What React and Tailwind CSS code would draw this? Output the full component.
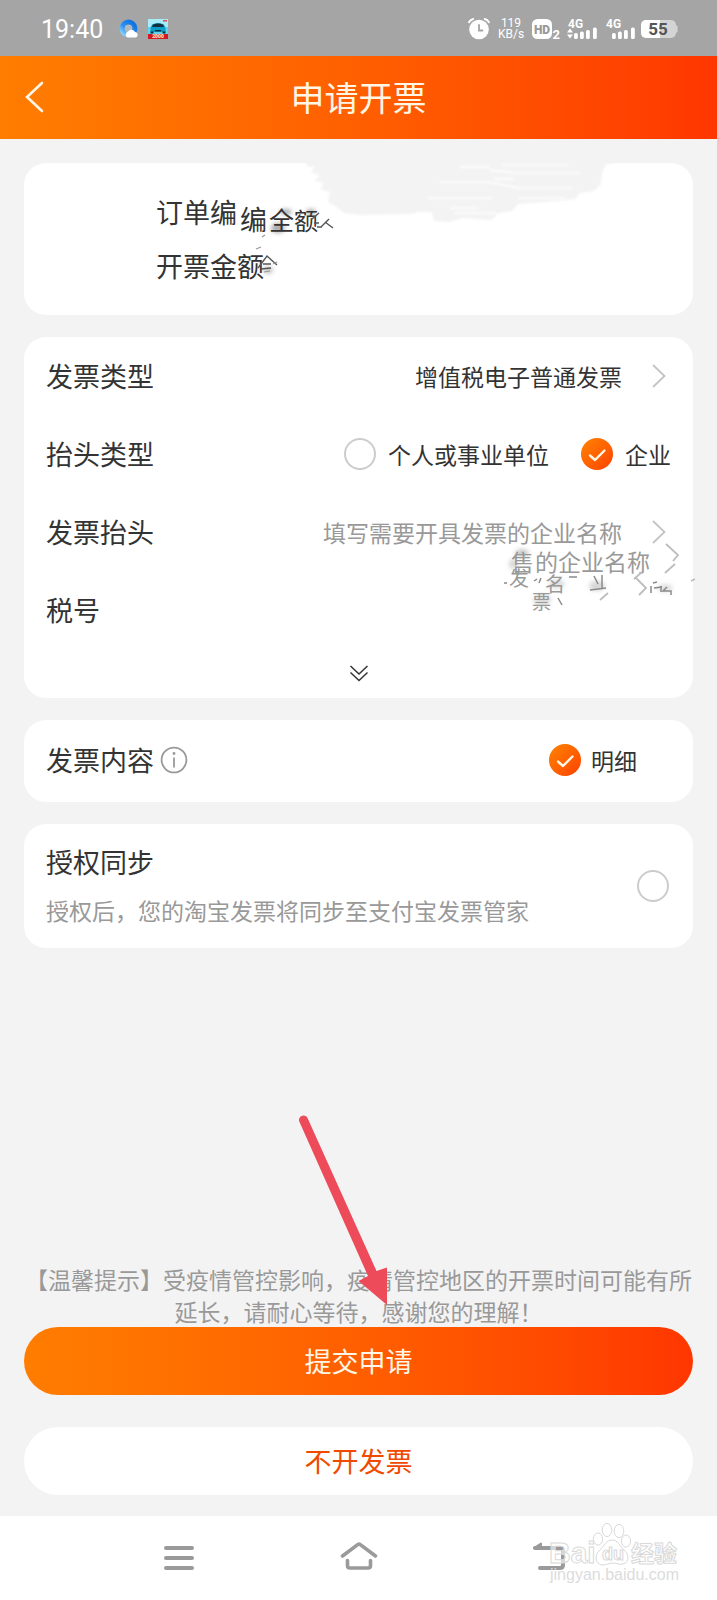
import React, { useState } from "react";

// Round radio / checkbox with the orange tick
const RoundInput = ({ type = "radio", ...props }) => (
  <span className="relative flex size-8 shrink-0">
    <input
      type={type}
      className="peer size-8 appearance-none rounded-full border-2 border-[#cccccc] bg-white checked:border-0 checked:bg-linear-135 checked:from-[#ff8200] checked:to-[#ff3c00]"
      {...props}
    />
    <svg
      viewBox="0 0 32 32"
      className="pointer-events-none absolute inset-0 hidden size-8 peer-checked:block"
      fill="none"
      stroke="#fff6e6"
      strokeWidth="2.4"
      strokeLinecap="round"
      strokeLinejoin="round"
    >
      <path d="M9 17.5 L14 22 L23.5 12.5" />
    </svg>
  </span>
);

const ChevronIcon = () => (
  <svg viewBox="0 0 24 24" className="size-6 shrink-0" fill="none" stroke="#c4c4c4" strokeWidth="1.8">
    <path d="M6 1 L17.5 12 L6 23" />
  </svg>
);

const Card = ({ className = "", children }) => (
  <section className={`relative rounded-[22px] bg-white ${className}`}>{children}</section>
);

const SignalIcon = ({ arrows }) => (
  <svg viewBox="0 0 31 22" className="h-[22px] w-[31px] overflow-visible" fill="#fff">
    <text x="1" y="10" fontSize="12" fontWeight="700" fontFamily="Roboto, sans-serif">
      4G
    </text>
    {arrows && <path d="M0 14.5 L3 10.5 L6 14.5 Z M0 16.5 L3 20.5 L6 16.5 Z" />}
    <rect x="7" y="15" width="3.8" height="6" rx="1.6" />
    <rect x="13" y="13.5" width="3.8" height="7.5" rx="1.6" />
    <rect x="19" y="12" width="3.8" height="9" rx="1.6" />
    <rect x="26" y="9.5" width="3.8" height="11.5" rx="1.6" />
  </svg>
);

const StatusBar = () => (
  <div className="flex h-14 items-center justify-between bg-[#a5a5a5] pt-0.5 pr-[39px] pl-[41px] font-['Roboto',sans-serif] text-white">
    <div className="flex items-center">
      <span className="pt-0.5 text-[25px] leading-8">19:40</span>
      <svg viewBox="0 0 20 20" className="ml-4 size-5">
        <defs>
          <linearGradient id="ring" x1="1" y1="0" x2="0" y2="1">
            <stop offset="0" stopColor="#0a6fe0" />
            <stop offset="0.6" stopColor="#2b8ff0" />
            <stop offset="1" stopColor="#8fdcff" />
          </linearGradient>
        </defs>
        <circle cx="9.5" cy="9.5" r="6.4" fill="#b4b8bd" stroke="url(#ring)" strokeWidth="5" />
        <path d="M8.5 18.5 a3.2 3.2 0 0 1 .6 -6 a4 4 0 0 1 7 .6 a2.8 2.8 0 0 1 .8 5.4 Z" fill="#fff" />
      </svg>
      <svg viewBox="0 0 20 20" className="ml-[9px] size-5">
        <rect width="20" height="20" fill="#a9ecf8" />
        <rect y="8" width="20" height="8" fill="#5fd4ee" />
        <path d="M4 5.5 Q10 2.5 16 5.5 L17.5 9 V13 H2.5 V9 Z" fill="#0c9cc8" />
        <path d="M5 5.8 Q10 3.4 15 5.8 L16 8 H4 Z" fill="#12303f" />
        <rect x="2.5" y="12.5" width="3" height="2" fill="#12303f" />
        <rect x="14.5" y="12.5" width="3" height="2" fill="#12303f" />
        <rect x="7" y="11" width="6" height="1.4" fill="#12303f" />
        <rect x="15" y="1" width="4" height="1.6" fill="#e0535c" />
        <rect y="15" width="20" height="5" fill="#d31920" />
        <text x="10" y="19.2" fontSize="5" fontWeight="900" textAnchor="middle" fill="#ffe9c0">
          2000
        </text>
      </svg>
    </div>
    <div className="flex items-center">
      <svg viewBox="0 0 22 22" className="size-[22px]" fill="none" stroke="#fff" strokeLinecap="round">
        <circle cx="11" cy="11.5" r="9.8" fill="#fff" stroke="none" />
        <path d="M1 4.2 Q2.5 1.5 5.2 1 M21 4.2 Q19.5 1.5 16.8 1" strokeWidth="2" />
        <path d="M11 7 V12.5 H14.5" stroke="#a5a5a5" strokeWidth="1.8" />
      </svg>
      <span className="ml-[9px] flex w-6 flex-col items-center text-[12px] leading-[11px]">
        <span>119</span>
        <span>KB/s</span>
      </span>
      <svg viewBox="0 0 29 22" className="ml-[9px] h-[22px] w-[29px]">
        <rect y="1" width="20" height="20" rx="5.5" fill="#fff" />
        <text x="10" y="15.5" fontSize="12" fontWeight="900" textAnchor="middle" fill="#999">
          HD
        </text>
        <text x="20.5" y="20.5" fontSize="13" fontWeight="700" fill="#fff">
          2
        </text>
      </svg>
      <span className="ml-[6px] flex gap-[7px]">
        <SignalIcon arrows />
        <SignalIcon />
      </span>
      <svg viewBox="0 0 37 18" className="ml-[5px] h-[18px] w-[37px]">
        <rect width="35" height="18" rx="5" fill="#d4d4d4" />
        <rect x="34" y="5.5" width="2.6" height="7" rx="1.2" fill="#d4d4d4" />
        <path d="M5 0 H19 V18 H5 A5 5 0 0 1 0 13 V5 A5 5 0 0 1 5 0 Z" fill="#fff" />
        <text x="17" y="15" fontSize="17" fontWeight="700" textAnchor="middle" fill="#555">
          55
        </text>
      </svg>
    </div>
  </div>
);

// Brushed-out order details on the first card
const OrderSmudge = () => (
  <svg
    viewBox="230 160 385 130"
    className="pointer-events-none absolute -top-[3px] left-[206px] h-[130px] w-[385px]"
    aria-hidden="true"
  >
    <defs>
      <filter id="soft1" x="-20%" y="-20%" width="140%" height="140%">
        <feGaussianBlur stdDeviation="1" />
      </filter>
      <filter id="soft2" x="-50%" y="-50%" width="200%" height="200%">
        <feGaussianBlur stdDeviation="2" />
      </filter>
    </defs>
    <path
      d="M303 158 L308 167 L315 166 L311 172 L320 176 L314 181 L324 183 L320 189 L330 192 L328 202 L335 206 L344 213 L360 215 L410 214 L418 212 L432 212 L434 221 L450 222 L462 218 L492 220 L498 213 L512 211 L518 204 L545 202 L575 199 L580 193 L594 191 L601 184 L602 173 L606 164 L628 162 L632 158 Z"
      fill="#f3f3f3"
      filter="url(#soft1)"
    />
    <g stroke="#fff" strokeWidth="1.6" fill="none" filter="url(#soft1)">
      <path d="M460 167 H490 M502 165 H568 M490 170 L516 173 H580 M440 182 H488 L518 188 H572 M494 179 H514 M428 198 H492 M518 198 H565 M450 208 H478 M454 213 H496" />
    </g>
    <g fill="#777" filter="url(#soft2)">
      <ellipse cx="278" cy="228" rx="7" ry="5" opacity="0.6" />
      <ellipse cx="286" cy="212" rx="6" ry="3" opacity="0.6" />
      <ellipse cx="311" cy="212" rx="5" ry="3" opacity="0.6" />
      <ellipse cx="268" cy="270" rx="5" ry="4" opacity="0.4" />
    </g>
    <g fill="#333" fontFamily="'Noto Sans CJK SC', sans-serif">
      <text x="240" y="230" fontSize="27">
        编
      </text>
      <text x="269" y="230" fontSize="25">
        全
      </text>
      <text x="294" y="230" fontSize="24">
        额
      </text>
    </g>
    <g stroke="#555" strokeWidth="1.4" fill="none">
      <path d="M312 219 L319 213 M314 223 H319 M317 227 H322 M321 227 L329 219 M325 222 L333 228" />
      <path d="M258 268 L267 256 L277 265 M263 264 H271 M261 269 L271 268" />
    </g>
    <g stroke="#999" strokeWidth="1.2" fill="none">
      <path d="M262 237 L265 235 M256 249 L261 247 M273 264 L277 262 M264 272 L270 271" />
    </g>
  </svg>
);

// Brushed-out company name next to the chevrons
const CompanySmudge = () => (
  <svg
    viewBox="493 540 208 80"
    className="pointer-events-none absolute top-[203px] -right-2 h-[80px] w-[208px]"
    aria-hidden="true"
  >
    <g fill="#999" filter="url(#soft2)">
      <ellipse cx="522" cy="553" rx="7" ry="4" opacity="0.5" />
      <ellipse cx="513" cy="564" rx="4" ry="5" opacity="0.4" />
      <ellipse cx="597" cy="586" rx="8" ry="5" opacity="0.4" />
      <ellipse cx="542" cy="600" rx="9" ry="6" opacity="0.35" />
      <ellipse cx="557" cy="584" rx="8" ry="5" opacity="0.3" />
      <ellipse cx="665" cy="588" rx="8" ry="4" opacity="0.3" />
    </g>
    <g fill="#999" fontFamily="'Noto Sans CJK SC', sans-serif">
      <text x="511" y="571" fontSize="23">
        售
      </text>
      <text x="535" y="571" fontSize="23">
        的企业名称
      </text>
      <text x="509" y="586" fontSize="20">
        发
      </text>
      <text x="545" y="592" fontSize="20">
        名
      </text>
      <text x="532" y="609" fontSize="19">
        票
      </text>
    </g>
    <g fill="none" stroke="#bdbdbd" strokeWidth="1.8">
      <path d="M666 544 L678 555 L673 561 M665 573 L675 564" />
      <path d="M636 578 L646 588 L639 595 M634 579 L642 572" />
      <path d="M600 600 L608 593" />
    </g>
    <g fill="none" stroke="#8a8a8a" strokeWidth="1.5">
      <path d="M594 576 L598 584 M602 575 V588 M590 590 L606 588" />
      <path d="M653 583 L657 582 M651 586 V593 M654 588 L662 587 M661 586 V592 M667 587 L663 591 H671 V595" />
      <path d="M558 598 L562 605 M504 583 H507 M534 581 L537 579 M541 578 L539 583 M569 577 H577" />
      <path d="M691 581 L695 579" stroke="#bbb" />
    </g>
  </svg>
);

const Watermark = () => (
  <svg
    viewBox="545 1518 140 72"
    className="pointer-events-none absolute top-[2px] right-8 h-[72px] w-[140px]"
    fill="#fff"
    fillOpacity="0.6"
    stroke="#d9d9d9"
    strokeWidth="1"
  >
    <text x="549" y="1563" fontSize="30" fontWeight="700" fontFamily="'Liberation Sans', sans-serif">
      Bai
    </text>
    <ellipse cx="607" cy="1530" rx="4.8" ry="6.6" />
    <ellipse cx="619" cy="1531" rx="4.8" ry="6.6" />
    <ellipse cx="598" cy="1539" rx="4.6" ry="6" />
    <ellipse cx="626" cy="1541" rx="4.6" ry="6" />
    <path d="M612 1540 C606 1540 604 1546 600 1550 C594 1555 595 1564 602 1565 C607 1565 609 1563 613 1563 C617 1563 619 1565 623 1564 C630 1562 629 1554 624 1550 C620 1546 618 1540 612 1540 Z" />
    <text x="602" y="1560" fontSize="18" fontWeight="700" fontFamily="'Liberation Sans', sans-serif">
      du
    </text>
    <text x="631" y="1562" fontSize="23" fontWeight="700" fontFamily="'Noto Sans CJK SC', sans-serif">
      经验
    </text>
    <text
      x="550"
      y="1580"
      fontSize="16"
      fontFamily="'Liberation Sans', sans-serif"
      fill="#dcdcdc"
      fillOpacity="1"
      stroke="none"
    >
      jingyan.baidu.com
    </text>
  </svg>
);

const NavBar = () => (
  <nav className="relative grid h-[84px] grid-cols-[1fr_auto_1fr] items-center bg-white pb-1 text-[#9a9a9a]">
    <button className="justify-self-end pr-[146px]" aria-label="菜单">
      <svg viewBox="0 0 30 30" className="size-[30px]" stroke="currentColor" strokeWidth="4" strokeLinecap="round">
        <path d="M2 7 H28 M2 17 H28 M2 27 H28" />
      </svg>
    </button>
    <button aria-label="主页">
      <svg
        viewBox="0 0 38 30"
        className="h-[30px] w-[38px]"
        fill="none"
        stroke="currentColor"
        strokeWidth="3.6"
        strokeLinecap="round"
        strokeLinejoin="round"
      >
        <path d="M2.5 15 L18 3.4 Q19 2.6 20 3.4 L35.5 15" />
        <path d="M7.5 19.5 V24.5 Q7.5 27 10 27 H28 Q30.5 27 30.5 24.5 V19.5" />
      </svg>
    </button>
    <button className="justify-self-start pl-[154px]" aria-label="返回">
      <svg
        viewBox="0 0 34 30"
        className="h-[30px] w-[34px]"
        fill="none"
        stroke="currentColor"
        strokeWidth="4"
        strokeLinecap="round"
      >
        <path d="M3 7 H28 Q31 7 31 10 V24 Q31 27 28 27 H8" />
        <path d="M2 7 L9 2.5 V7 Z" fill="currentColor" strokeWidth="2" strokeLinejoin="round" />
      </svg>
    </button>
    <Watermark />
  </nav>
);

const App = () => {
  const [titleType, setTitleType] = useState("company");
  const [sync, setSync] = useState(false);
  const [taxNo, setTaxNo] = useState("");

  return (
    <div className="flex min-h-screen flex-col bg-[#f3f3f3] font-['Noto_Sans_CJK_SC',sans-serif] text-[23px] text-[#333333]">
      <StatusBar />

      <header className="grid h-[83px] grid-cols-[1fr_auto_1fr] items-center bg-linear-to-r from-[#ff7d00] to-[#ff3600] px-6 pb-0.5 text-[#fff6e6]">
        <button className="justify-self-start" aria-label="返回">
          <svg
            viewBox="0 0 20 32"
            className="h-8 w-5"
            fill="none"
            stroke="currentColor"
            strokeWidth="2.6"
            strokeLinecap="round"
          >
            <path d="M18 2 L3 16 L18 30" />
          </svg>
        </button>
        <h1 className="text-[34px] leading-10">申请开票</h1>
      </header>

      <main className="flex flex-1 flex-col gap-[22px] px-6 pt-6 pb-[21px]">
        <Card className="py-[22px] pl-[132px] text-[27px] leading-[54px]">
          <p>订单编</p>
          <p>开票金额</p>
          <OrderSmudge />
        </Card>

        <Card className="px-[22px]">
          <div className="flex h-[78px] items-center justify-between">
            <span id="invoice-type" className="text-[27px]">
              发票类型
            </span>
            <button className="flex items-center gap-[25px]" aria-describedby="invoice-type">
              增值税电子普通发票
              <ChevronIcon />
            </button>
          </div>
          <div className="flex h-[78px] items-center justify-between" role="radiogroup" aria-labelledby="title-type">
            <span id="title-type" className="text-[27px]">
              抬头类型
            </span>
            <div className="flex gap-8">
              <label className="flex items-center gap-3">
                <RoundInput
                  name="titleType"
                  checked={titleType === "personal"}
                  onChange={() => setTitleType("personal")}
                />
                个人或事业单位
              </label>
              <label className="flex items-center gap-3">
                <RoundInput
                  name="titleType"
                  checked={titleType === "company"}
                  onChange={() => setTitleType("company")}
                />
                企业
              </label>
            </div>
          </div>
          <div className="flex h-[78px] items-center justify-between">
            <span id="invoice-title" className="text-[27px]">
              发票抬头
            </span>
            <button className="flex items-center gap-[25px] text-[#999999]" aria-describedby="invoice-title">
              填写需要开具发票的企业名称
              <ChevronIcon />
            </button>
          </div>
          <div className="flex h-[78px] items-center gap-6">
            <label htmlFor="tax-no" className="text-[27px]">
              税号
            </label>
            <input
              id="tax-no"
              className="min-w-0 flex-1 bg-transparent text-right outline-none"
              value={taxNo}
              onChange={(e) => setTaxNo(e.target.value)}
            />
          </div>
          <button className="flex h-[49px] w-full items-center justify-center" aria-label="展开更多">
            <svg viewBox="0 0 20 20" className="size-5" fill="none" stroke="#333" strokeWidth="1.5">
              <path d="M1.5 2 L10 10 L18.5 2 M1.5 8.5 L10 16.5 L18.5 8.5" />
            </svg>
          </button>
          <CompanySmudge />
        </Card>

        <Card className="flex h-[82px] items-center justify-between pr-14 pb-0.5 pl-[22px]">
          <div className="flex items-center gap-1.5">
            <span className="text-[27px]">发票内容</span>
            <button aria-label="说明">
              <svg viewBox="0 0 28 28" className="size-7" fill="none" stroke="#999" strokeWidth="1.8">
                <circle cx="14" cy="14" r="12.4" />
                <path d="M14 11.5 V21.5" />
                <circle cx="14" cy="7.5" r="1.4" fill="#999" stroke="none" />
              </svg>
            </button>
          </div>
          <label className="flex items-center gap-[10px]">
            <RoundInput name="content" defaultChecked />
            明细
          </label>
        </Card>

        <Card className="py-[14px] pr-6 pl-[22px]">
          <label className="flex items-center justify-between leading-[48px]">
            <span>
              <span className="block text-[27px]">授权同步</span>
              <span className="block text-[#999999]">授权后，您的淘宝发票将同步至支付宝发票管家</span>
            </span>
            <RoundInput type="checkbox" checked={sync} onChange={(e) => setSync(e.target.checked)} />
          </label>
        </Card>

        <div className="relative mt-auto">
          <p className="text-center leading-8 text-[#999999]">
            【温馨提示】受疫情管控影响，疫情管控地区的开票时间可能有所延长，请耐心等待，感谢您的理解！
          </p>
          <button className="h-[68px] w-full rounded-full bg-linear-to-r from-[#ff7d00] to-[#ff3600] text-[27px] text-[#fff6e6]">
            提交申请
          </button>
          <button className="mt-8 h-[68px] w-full rounded-full bg-white text-[27px] text-[#f04a00]">
            不开发票
          </button>
          {/* Pointer to the submit button */}
          <svg
            viewBox="294 1114 96 192"
            className="pointer-events-none absolute -top-[149px] left-1/2 -ml-16 h-48 w-24"
            fill="#ed4a5a"
          >
            <path d="M298.5 1122 A4.2 4.2 0 0 1 306.5 1118 L375.5 1271 L386 1267.5 V1305 L357.5 1281 L367 1276 Z" />
          </svg>
        </div>
      </main>

      <NavBar />
    </div>
  );
};

export default App;
